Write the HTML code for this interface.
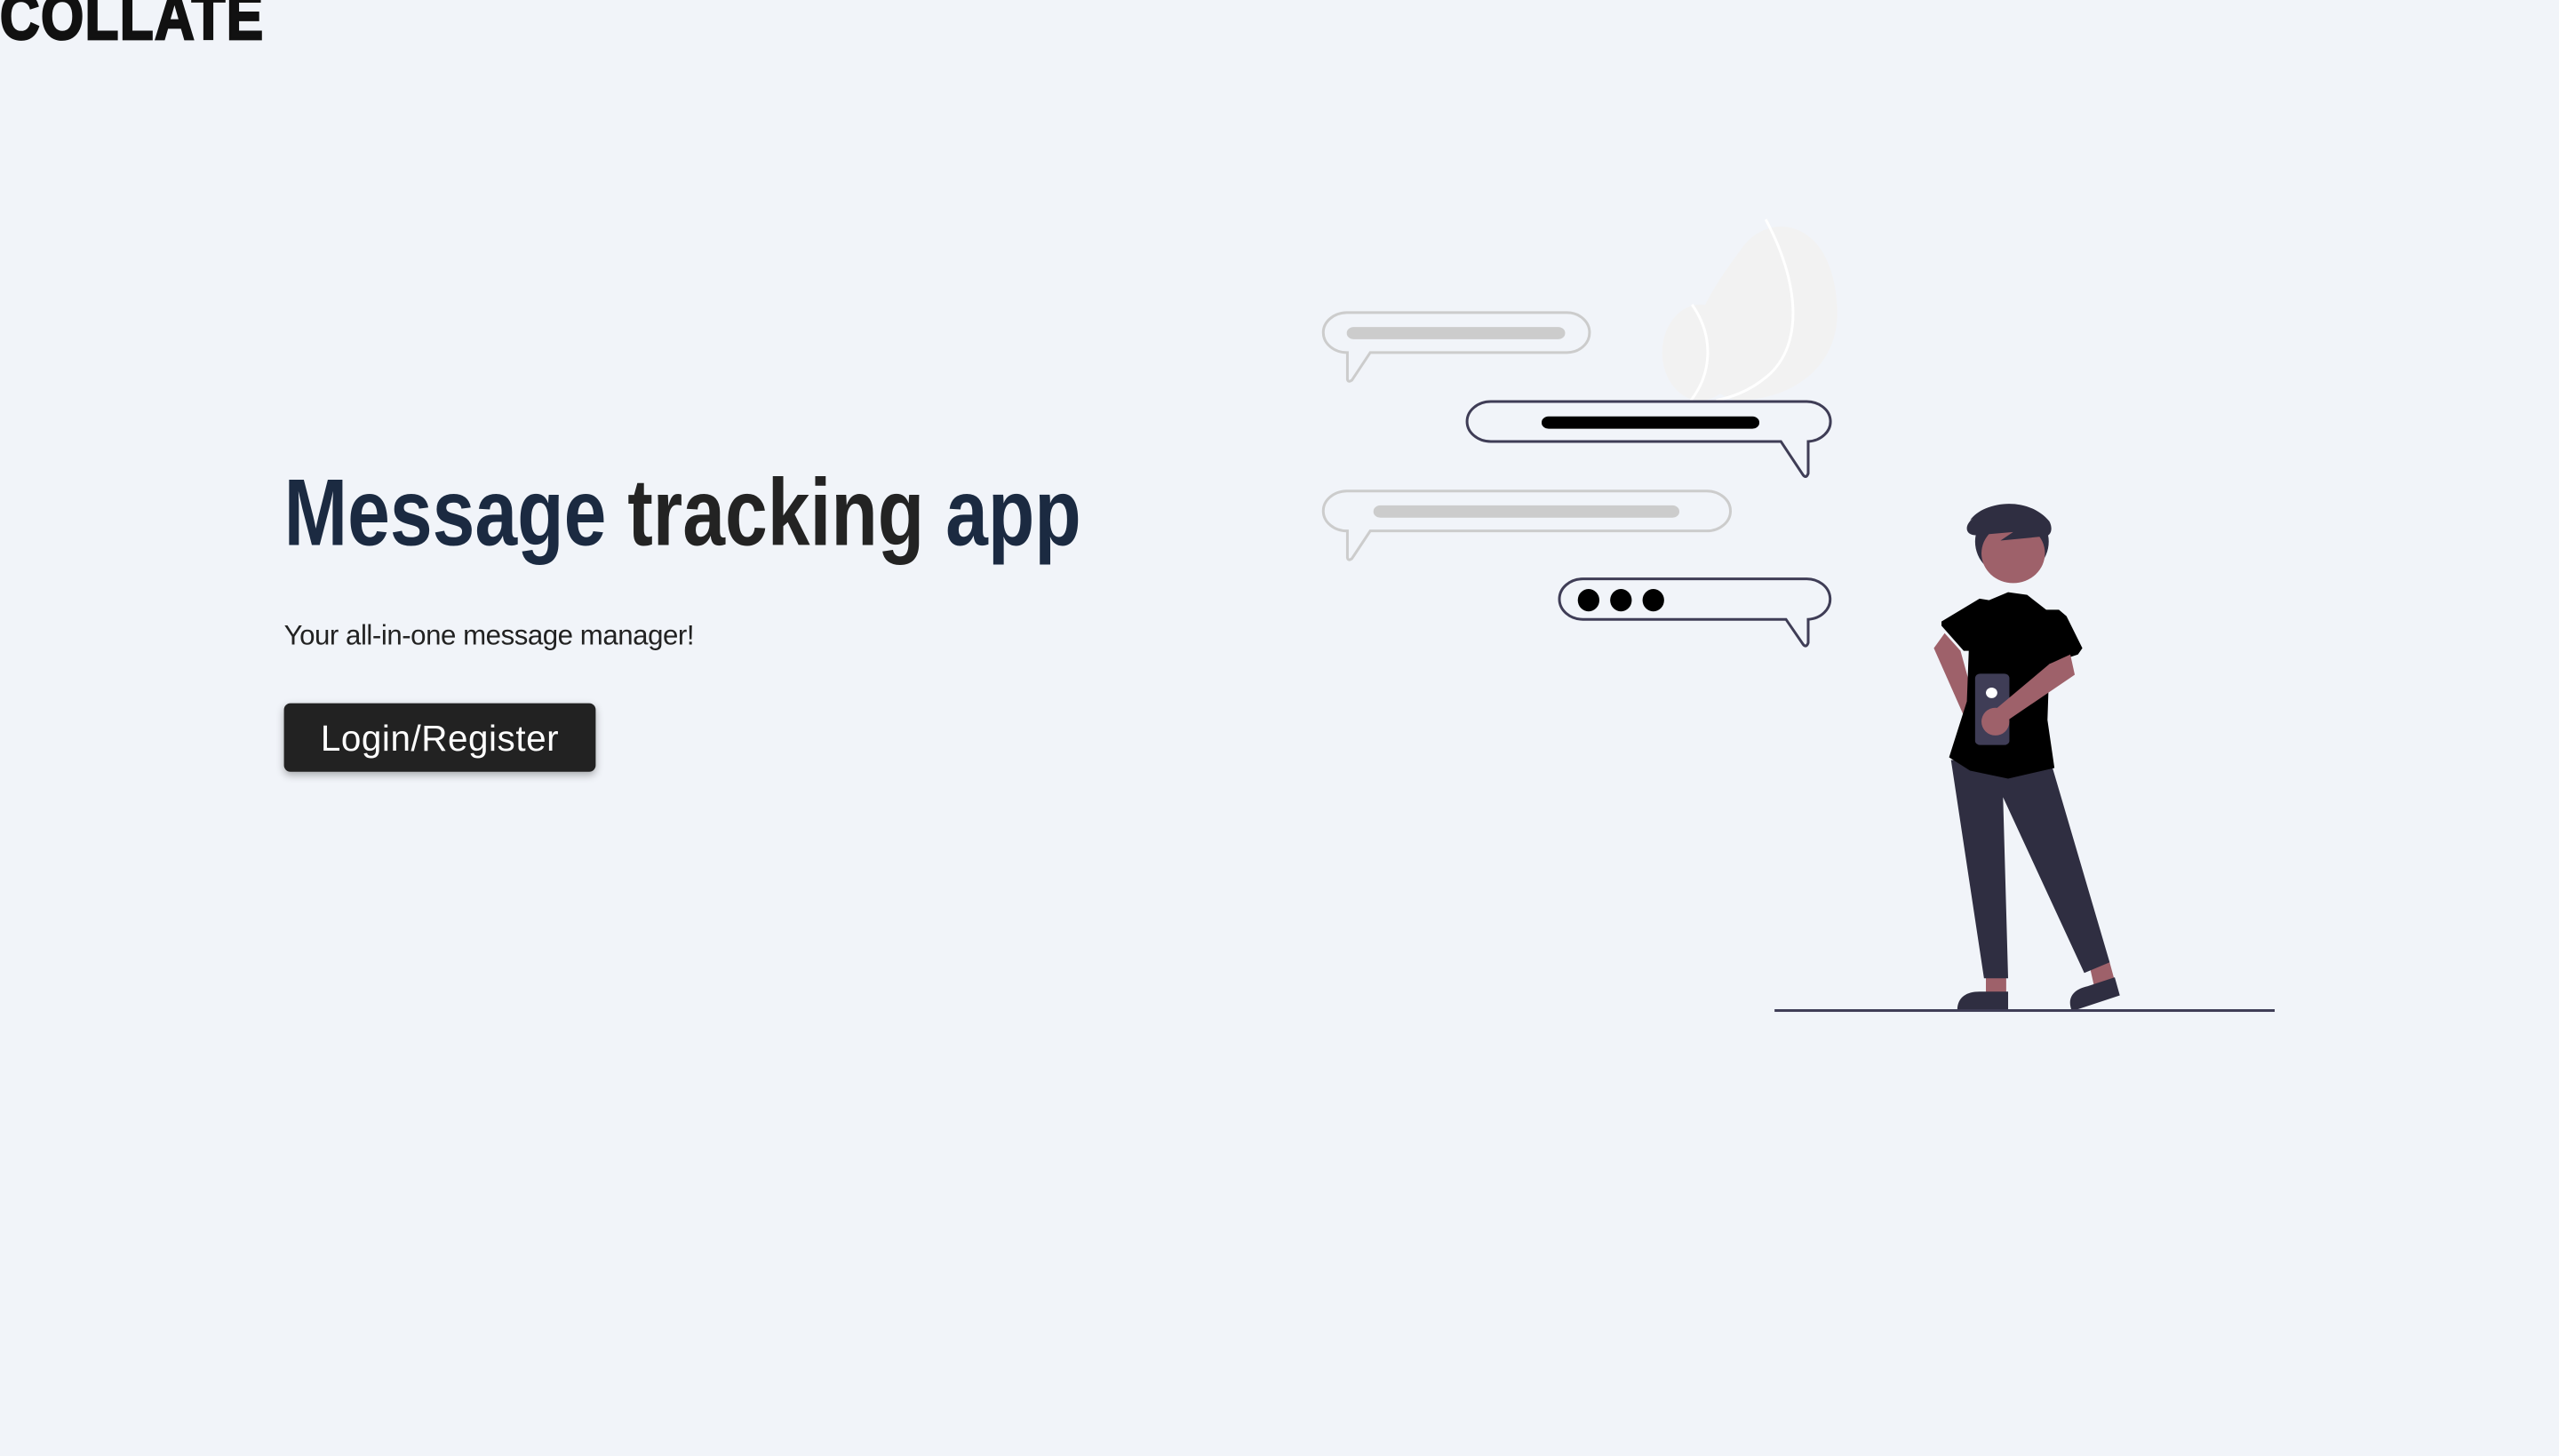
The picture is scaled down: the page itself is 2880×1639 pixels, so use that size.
<!DOCTYPE html>
<html><head><meta charset="utf-8"><style>
html,body{margin:0;padding:0;background:#f1f4f9;width:2880px;height:1639px;overflow:hidden}
#c{position:absolute;left:0;top:0;width:1568px;height:892px;transform:scale(1.8367);transform-origin:0 0}
.logo{position:absolute;left:0;top:-9px;font-family:"Liberation Sans",sans-serif;font-weight:900;font-size:40px;letter-spacing:1px;color:#111;line-height:1;white-space:nowrap;transform:scaleX(0.84);transform-origin:0 0;-webkit-text-stroke:1.5px #111}
h1{position:absolute;left:174px;top:286px;margin:0;font-family:"Liberation Sans",sans-serif;font-weight:bold;font-size:58px;line-height:1;white-space:nowrap;color:#1b2a41;transform:scaleX(0.806);transform-origin:0 0}
h1 span{color:#232323}
p{position:absolute;left:174px;top:380px;margin:0;font-family:"Liberation Sans",sans-serif;font-size:17px;letter-spacing:-0.25px;color:#222;white-space:nowrap}
.btn{position:absolute;left:174px;top:431px;width:191px;height:42px;background:#222;border-radius:4px;box-shadow:0 2px 5px rgba(0,0,0,.3);color:#fff;font-family:"Liberation Sans",sans-serif;font-size:22px;line-height:44px;text-align:center;letter-spacing:0.3px}
svg{position:absolute;left:0;top:0}
</style></head><body>
<svg width="2880" height="1639" viewBox="0 0 2880 1639">
<g transform="translate(1460,220) scale(0.7143,0.5995)">
<g fill="#f2f2f2">
<path d="M690,385 C560,330 650,180 700,100 C740,30 840,40 850,200 C860,320 780,385 690,385 Z"/>
<ellipse cx="635" cy="295" rx="60" ry="90"/>
</g>
<g fill="none" stroke="#fff" stroke-width="3">
<path d="M738,45 C790,160 800,280 740,340 C710,370 680,380 660,385" vector-effect="non-scaling-stroke"/>
<path d="M622,205 C660,270 650,340 620,385" vector-effect="non-scaling-stroke"/>
</g>
<g fill="none" stroke-width="3">
<path stroke="#cccccc" vector-effect="non-scaling-stroke" d="M78,220 H425 A35 37 0 0 1 425,295 H115 L86,347 Q80,352 79,345 V295 A37 37 0 0 1 78,220 Z"/>
<path stroke="#3f3d56" vector-effect="non-scaling-stroke" d="M305,387 H800 A37 37 0 0 1 805,462 V522 Q802,532 797,525 L762,462 H305 A37 37 0 0 1 305,387 Z"/>
<path stroke="#cccccc" vector-effect="non-scaling-stroke" d="M78,555 H645 A37 37 0 0 1 645,630 H115 L86,682 Q80,687 79,680 V630 A37 37 0 0 1 78,555 Z"/>
<path stroke="#3f3d56" vector-effect="non-scaling-stroke" d="M450,720 H800 A37 38 0 0 1 805,796 V840 Q802,850 797,843 L770,796 H450 A37 38 0 0 1 450,720 Z"/>
</g>
<rect x="78" y="247" width="344" height="23" rx="11" fill="#cccccc"/>
<rect x="385" y="415" width="343" height="23" rx="11" fill="#000"/>
<rect x="120" y="582" width="482" height="23" rx="11" fill="#cccccc"/>
<ellipse cx="459" cy="760" rx="17" ry="21" fill="#000"/>
<ellipse cx="510" cy="760" rx="17" ry="21" fill="#000"/>
<ellipse cx="561" cy="760" rx="17" ry="21" fill="#000"/>
<path fill="#9e616a" d="M1085,1465 H1117 V1500 H1085 Z M1248,1445 L1280,1440 L1288,1475 L1255,1482 Z"/>
<path fill="#2f2e41" d="M1030,1060 L1190,1075 L1280,1440 L1240,1460 L1112,1130 L1120,1470 L1082,1470 Z"/>
<path fill="#2f2e41" d="M1040,1530 C1040,1505 1055,1495 1075,1495 H1120 V1530 Z M1220,1530 C1212,1505 1225,1490 1245,1485 L1288,1468 L1296,1502 L1225,1530 Z"/>
<path fill="#9e616a" d="M1020,822 L1003,850 L1055,990 L1075,985 L1045,855 Z"/>
<ellipse cx="1065" cy="1000" rx="15" ry="20" fill="#9e616a"/>
<path fill="#000" d="M1015,800 L1075,757 L1090,760 L1120,745 L1150,750 L1180,778 L1200,778 L1212,790 L1237,850 L1230,862 L1185,880 L1182,985 L1193,1075 L1120,1095 L1060,1080 L1027,1055 L1055,950 L1058,855 L1050,855 L1015,808 Z"/>
<rect x="1068" y="898" width="54" height="134" rx="8" fill="#3f3d56"/>
<ellipse cx="1094" cy="934" rx="9" ry="10" fill="#fff"/>
<path fill="#9e616a" d="M1185,880 L1218,862 L1225,900 L1120,985 L1100,965 Z"/>
<ellipse cx="1100" cy="988" rx="22" ry="26" fill="#9e616a"/>
<ellipse cx="1126" cy="650" rx="58" ry="66" fill="#2f2e41"/>
<ellipse cx="1128" cy="672" rx="50" ry="56" fill="#9e616a"/>
<path fill="#2f2e41" d="M1060,610 C1080,575 1150,562 1185,612 C1192,628 1186,640 1178,640 L1108,648 L1128,632 L1070,638 C1052,638 1050,620 1065,606 Z"/>
<rect x="752" y="1528" width="788" height="5" fill="#3f3d56"/>
</g>
</svg>
<div id="c">
<div class="logo">COLLATE</div>
<h1>Message <span>tracking</span> app</h1>
<p>Your all-in-one message manager!</p>
<div class="btn">Login/Register</div>
</div>
</body></html>
